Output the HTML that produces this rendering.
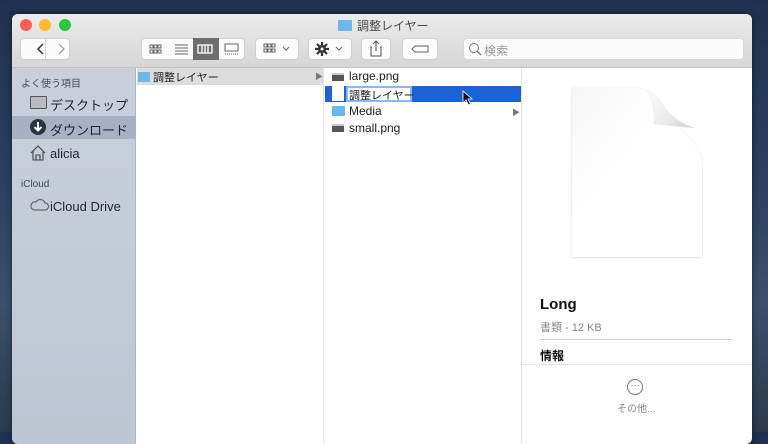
<!DOCTYPE html>
<html><head><meta charset="utf-8"><style>
*{margin:0;padding:0;box-sizing:border-box}
body{width:768px;height:432px;overflow:hidden;position:relative;font-family:"Liberation Sans","Noto Sans CJK JP",sans-serif;background:linear-gradient(180deg,#1f3150 0%,#2a3f60 40%,#3a506c 70%,#2c3a4c 100%)}
.abs{position:absolute}
.win{left:12px;top:14px;width:740px;height:430px;border-radius:6px;overflow:hidden;background:#fff;box-shadow:0 0 6px rgba(0,0,0,.5)}
.tb{left:0;top:0;width:740px;height:54px;background:linear-gradient(#ebebeb,#d6d6d6);border-bottom:1px solid #c2c2c2}
.dot{width:12px;height:12px;border-radius:50%;top:5px}
.btn{background:#fbfbfb;border:1px solid #cfcfcf;border-radius:4px;height:22px;top:24px}
.side{left:0;top:54px;width:124px;height:380px;background:linear-gradient(#c9d0db,#bcc6d4);border-right:1px solid #b0b6be}
.st{font-size:13px;color:#1f2530}
.sh{font-size:10px;color:#444c58}
.fi{font-size:12px;color:#222}
</style></head><body>
<div class="abs win">
 <div class="abs tb">
  <div class="abs dot" style="left:8px;background:#fc5f57"></div>
  <div class="abs dot" style="left:27px;background:#fdbc2e"></div>
  <div class="abs dot" style="left:47px;background:#28c840"></div>
  <div class="abs" style="left:326px;top:6px;width:14px;height:11px;background:#6cb8ec;border-radius:1px"></div>
  <div class="abs" style="left:345px;top:3px;font-size:12px;color:#4a4a4a">調整レイヤー</div>
  <div class="abs btn" style="left:8px;width:50px"></div>
  <div class="abs" style="left:33px;top:25px;width:1px;height:20px;background:#d6d6d6"></div>
  <svg class="abs" style="left:8px;top:24px" width="50" height="22"><path d="M23 6 L18 11 L23 16" fill="none" stroke="#333" stroke-width="1.5"/><path d="M39 6 L44 11 L39 16" fill="none" stroke="#999" stroke-width="1.2"/></svg>
  <div class="abs btn" style="left:129px;width:104px"></div>
  <div class="abs" style="left:181px;top:24px;width:26px;height:22px;background:#6e6e6e"></div>
  <svg class="abs" style="left:129px;top:24px" width="104" height="22">
   <g fill="none" stroke="#666" stroke-width="1"><rect x="9" y="7" width="3" height="3"/><rect x="13" y="7" width="3" height="3"/><rect x="17" y="7" width="3" height="3"/><rect x="9" y="12" width="3" height="3"/><rect x="13" y="12" width="3" height="3"/><rect x="17" y="12" width="3" height="3"/>
   <path d="M34 7H47M34 10H47M34 13H47M34 16H47"/>
   <rect x="84" y="6" width="13" height="7"/><path d="M84 16H97" stroke-dasharray="1 1"/></g>
   <g fill="none" stroke="#fff" stroke-width="1.3"><rect x="57" y="7" width="14" height="8"/><path d="M61 7V15M64 7V15M67 7V15"/></g>
  </svg>
  <div class="abs btn" style="left:243px;width:44px"></div>
  <svg class="abs" style="left:243px;top:24px" width="44" height="22"><g fill="none" stroke="#666"><rect x="9" y="6" width="3" height="3"/><rect x="13" y="6" width="3" height="3"/><rect x="17" y="6" width="3" height="3"/><rect x="9" y="11" width="3" height="3"/><rect x="13" y="11" width="3" height="3"/><rect x="17" y="11" width="3" height="3"/><path d="M28 9L31 12L34 9"/></g></svg>
  <div class="abs btn" style="left:296px;width:44px"></div>
  <svg class="abs" style="left:296px;top:24px" width="44" height="22"><g stroke="#333" stroke-width="2.2"><path d="M14 4V18M7 11H21M9 6L19 16M19 6L9 16"/></g><circle cx="14" cy="11" r="4" fill="#333"/><circle cx="14" cy="11" r="1.5" fill="#fff"/><path d="M28 9L31 12L34 9" fill="none" stroke="#666"/></svg>
  <div class="abs btn" style="left:349px;width:30px"></div>
  <svg class="abs" style="left:349px;top:24px" width="30" height="22"><path d="M11 9H10V18H20V9H19M15 13V3M12 6L15 3L18 6" fill="none" stroke="#555"/></svg>
  <div class="abs btn" style="left:390px;width:36px"></div>
  <svg class="abs" style="left:390px;top:24px" width="36" height="22"><path d="M13 8H26V14H13L10 11Z" fill="none" stroke="#666"/></svg>
  <div class="abs btn" style="left:451px;width:281px;border-color:#d8d8d8"></div>
  <svg class="abs" style="left:456px;top:28px" width="14" height="14"><circle cx="6" cy="6" r="4.5" fill="none" stroke="#777"/><path d="M9 9L13 13" stroke="#777" stroke-width="1.3"/></svg>
  <div class="abs" style="left:472px;top:28px;font-size:12px;color:#999">検索</div>
 </div>
 <div class="abs side">
  <div class="abs sh" style="left:9px;top:7px">よく使う項目</div>
  <div class="abs" style="left:18px;top:28px;width:17px;height:13px;border:1px solid #555;background:#b8bcc2;border-radius:1px"></div>
  <div class="abs st" style="left:38px;top:27px">デスクトップ</div>
  <div class="abs" style="left:0;top:48px;width:124px;height:23px;background:#a6b1c4"></div>
  <svg class="abs" style="left:18px;top:51px" width="16" height="16"><circle cx="8" cy="8" r="8" fill="#2c323c"/><path d="M8 3V11M4.5 8L8 11.5L11.5 8" stroke="#fff" stroke-width="2" fill="none"/></svg>
  <div class="abs st" style="left:38px;top:52px">ダウンロード</div>
  <svg class="abs" style="left:17px;top:76px" width="18" height="18"><path d="M2 9L9 2L16 9M4 7V16H14V7M7 16V11H11V16" fill="none" stroke="#444" stroke-width="1.1"/></svg>
  <div class="abs st" style="left:38px;top:78px">alicia</div>
  <div class="abs sh" style="left:9px;top:111px">iCloud</div>
  <svg class="abs" style="left:17px;top:129px" width="20" height="14"><path d="M5 13H16A3.5 3.5 0 0 0 16 6A5 5 0 0 0 7 5A4 4 0 0 0 5 13Z" fill="none" stroke="#555"/></svg>
  <div class="abs st" style="left:38px;top:131px">iCloud Drive</div>
 </div>
 <div class="abs" style="left:125px;top:54px;width:186px;height:17px;background:#dcdcdc"></div>
 <div class="abs" style="left:126px;top:58px;width:12px;height:10px;background:#6cb8ec"></div>
 <div class="abs fi" style="left:141px;top:55px;font-size:11px">調整レイヤー</div>
 <div class="abs" style="left:303px;top:57px;font-size:8px;color:#777">▶</div>
 <div class="abs" style="left:311px;top:54px;width:1px;height:380px;background:#e2e2e2"></div>
 <div class="abs" style="left:509px;top:54px;width:1px;height:380px;background:#e2e2e2"></div>
 <div class="abs" style="left:320px;top:59px;width:12px;height:8px;background:#555;border-top:2px solid #ccc"></div>
 <div class="abs fi" style="left:337px;top:55px">large.png</div>
 <div class="abs" style="left:313px;top:72px;width:196px;height:16px;background:#1b62d6"></div>
 <div class="abs" style="left:320px;top:72px;width:12px;height:15px;background:#fff"></div>
 <div class="abs" style="left:334px;top:72px;width:66px;height:16px;background:#fff;border:2px solid #8fb7ef"></div>
 <div class="abs fi" style="left:337px;top:73px;font-size:11px">調整レイヤー</div>
 <svg class="abs" style="left:450px;top:76px" width="12" height="16"><path d="M1 1V13L4 10L6.5 15L8.5 14L6 9H10Z" fill="#111" stroke="#fff" stroke-width="0.8"/></svg>
 <div class="abs" style="left:320px;top:92px;width:13px;height:10px;background:#6cb8ec"></div>
 <div class="abs fi" style="left:337px;top:90px">Media</div>
 <div class="abs" style="left:500px;top:93px;font-size:8px;color:#777">▶</div>
 <div class="abs" style="left:320px;top:110px;width:12px;height:8px;background:#555;border-top:2px solid #ccc"></div>
 <div class="abs fi" style="left:337px;top:107px">small.png</div>
 <svg class="abs" style="left:543px;top:58px" width="170" height="200"><defs><linearGradient id="g" x1="0" y1="0" x2="1" y2="1"><stop offset="0" stop-color="#fdfdfd"/><stop offset="0.6" stop-color="#eaeaea"/><stop offset="1" stop-color="#cfcfcf"/></linearGradient><linearGradient id="p" x1="0" y1="0" x2="1" y2="1"><stop offset="0" stop-color="#f6f6f6"/><stop offset="0.4" stop-color="#fff"/></linearGradient><filter id="s"><feDropShadow dx="0" dy="0.5" stdDeviation="1" flood-opacity="0.18"/></filter></defs>
 <path filter="url(#s)" d="M17 16 H80 Q92 16 99 25 L139 72 Q147 82 147 94 V185 H17Z" fill="url(#p)"/>
 <path d="M92 18 Q101 32 99 52 L139 56 Q121 50 110 36 Q101 22 92 18Z" fill="url(#g)" stroke="#e4e4e4" stroke-width="0.5"/>
 </svg>
 <div class="abs" style="left:528px;top:282px;font-size:15px;font-weight:bold;color:#111">Long</div>
 <div class="abs" style="left:528px;top:305px;font-size:11px;color:#888">書類 - 12 KB</div>
 <div class="abs" style="left:528px;top:325px;width:192px;height:1px;background:#d0d0d0"></div>
 <div class="abs" style="left:528px;top:333px;font-size:12px;font-weight:bold;color:#111">情報</div>
 <div class="abs" style="left:510px;top:350px;width:230px;height:1px;background:#e6e6e6"></div>
 <div class="abs" style="left:615px;top:365px;width:16px;height:16px;border:1px solid #777;border-radius:50%;font-size:9px;text-align:center;line-height:11px;color:#555">···</div>
 <div class="abs" style="left:605px;top:386px;font-size:10px;color:#888">その他...</div>
</div>
</body></html>
